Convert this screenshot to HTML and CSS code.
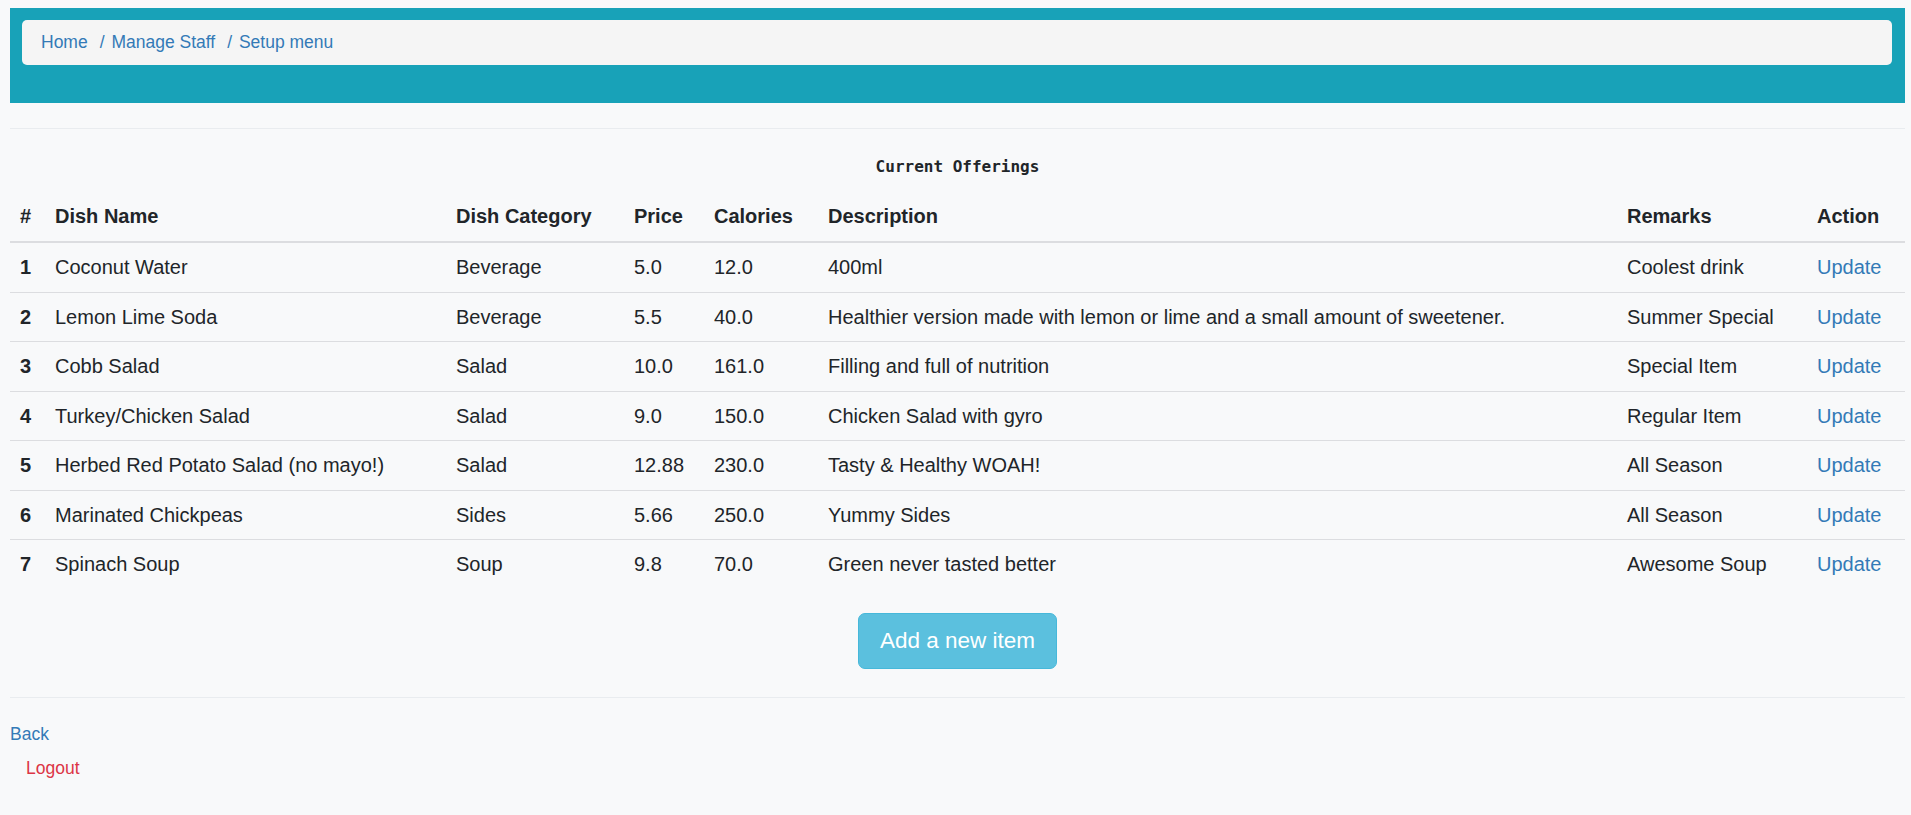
FILE: index.html
```html
<!DOCTYPE html>
<html lang="en">
<head>
<meta charset="utf-8">
<title>Setup menu</title>
<link rel="stylesheet" href="styles.css">
</head>
<body>
  <div class="banner">
    <ol class="breadcrumb">
      <li><a href="#">Home</a></li>
      <li><a href="#">Manage Staff</a></li>
      <li><a href="#">Setup menu</a></li>
    </ol>
  </div>
  <hr class="rule">
  <table class="menu-table">
    <caption>Current Offerings</caption>
    <colgroup>
      <col class="c-num"><col class="c-name"><col class="c-cat"><col class="c-price"><col class="c-cal"><col class="c-desc"><col class="c-rem"><col class="c-act">
    </colgroup>
    <thead>
      <tr><th>#</th><th>Dish Name</th><th>Dish Category</th><th>Price</th><th>Calories</th><th>Description</th><th>Remarks</th><th>Action</th></tr>
    </thead>
    <tbody>
      <tr><th>1</th><td>Coconut Water</td><td>Beverage</td><td>5.0</td><td>12.0</td><td>400ml</td><td>Coolest drink</td><td><a href="#">Update</a></td></tr>
      <tr><th>2</th><td>Lemon Lime Soda</td><td>Beverage</td><td>5.5</td><td>40.0</td><td>Healthier version made with lemon or lime and a small amount of sweetener.</td><td>Summer Special</td><td><a href="#">Update</a></td></tr>
      <tr><th>3</th><td>Cobb Salad</td><td>Salad</td><td>10.0</td><td>161.0</td><td>Filling and full of nutrition</td><td>Special Item</td><td><a href="#">Update</a></td></tr>
      <tr><th>4</th><td>Turkey/Chicken Salad</td><td>Salad</td><td>9.0</td><td>150.0</td><td>Chicken Salad with gyro</td><td>Regular Item</td><td><a href="#">Update</a></td></tr>
      <tr><th>5</th><td>Herbed Red Potato Salad (no mayo!)</td><td>Salad</td><td>12.88</td><td>230.0</td><td>Tasty &amp; Healthy WOAH!</td><td>All Season</td><td><a href="#">Update</a></td></tr>
      <tr><th>6</th><td>Marinated Chickpeas</td><td>Sides</td><td>5.66</td><td>250.0</td><td>Yummy Sides</td><td>All Season</td><td><a href="#">Update</a></td></tr>
      <tr><th>7</th><td>Spinach Soup</td><td>Soup</td><td>9.8</td><td>70.0</td><td>Green never tasted better</td><td>Awesome Soup</td><td><a href="#">Update</a></td></tr>
    </tbody>
  </table>
  <div class="actions">
    <a class="btn-add" href="#">Add a new item</a>
  </div>
  <hr class="rule">
  <div class="footer-links">
    <a class="back" href="#">Back</a>
    <a class="logout" href="#">Logout</a>
  </div>
</body>
</html>
```
FILE: styles.css
```css
html, body {
  background: #f8f9fa;
}
body {
  margin: 8px 6px 0 10px;
  font-family: "Liberation Sans", Arial, sans-serif;
  font-size: 17.5px;
  line-height: 25px;
  color: #212529;
}
a {
  color: #337ab7;
  text-decoration: none;
}
.banner {
  background: #18a2b8;
  padding: 12px 13px 38px 12px;
}
.breadcrumb {
  list-style: none;
  margin: 0;
  padding: 10px 19px;
  background: #f5f5f5;
  border-radius: 5px;
  display: flex;
  height: 25px;
}
.breadcrumb li + li::before {
  content: "/\00a0";
  padding: 0 2px 0 12px;
  color: #337ab7;
}
.rule {
  border: 0;
  border-top: 1px solid #e9ecef;
  margin: 25px 0 0 0;
  height: 0;
}
.menu-table {
  width: 100%;
  border-collapse: collapse;
  table-layout: fixed;
  font-size: 20px;
  line-height: 28.5px;
}
.menu-table caption {
  font-family: "DejaVu Sans Mono", "Liberation Mono", monospace;
  font-weight: bold;
  font-size: 16px;
  line-height: 20px;
  color: #212529;
  padding: 28px 0 15px;
  text-align: center;
}
.c-num { width: 35px; }
.c-name { width: 401px; }
.c-cat { width: 178px; }
.c-price { width: 80px; }
.c-cal { width: 114px; }
.c-desc { width: 799px; }
.c-rem { width: 190px; }
.c-act { width: 98px; }
.menu-table th,
.menu-table td {
  padding: 10px;
  text-align: left;
  vertical-align: top;
  white-space: nowrap;
}
.menu-table thead th {
  border-bottom: 2px solid #dcdde0;
  padding-bottom: 10.5px;
}
.menu-table tbody tr + tr th,
.menu-table tbody tr + tr td {
  border-top: 1px solid #dcdde0;
}
.menu-table tbody th {
  font-weight: bold;
}
.actions {
  display: flex;
  justify-content: center;
  padding: 24px 0 3px;
}
.btn-add {
  display: block;
  background: #5bc0de;
  border: 1px solid #46b8da;
  border-radius: 7px;
  color: #fff;
  font-size: 22.5px;
  line-height: 30px;
  padding: 12px 21px;
}
.footer-links {
  display: flex;
  flex-direction: column;
  align-items: flex-start;
  padding-top: 24px;
}
.back {
  line-height: 25px;
}
.logout {
  color: #dc3545;
  margin-left: 16px;
  margin-top: 9px;
  line-height: 25px;
}
```
